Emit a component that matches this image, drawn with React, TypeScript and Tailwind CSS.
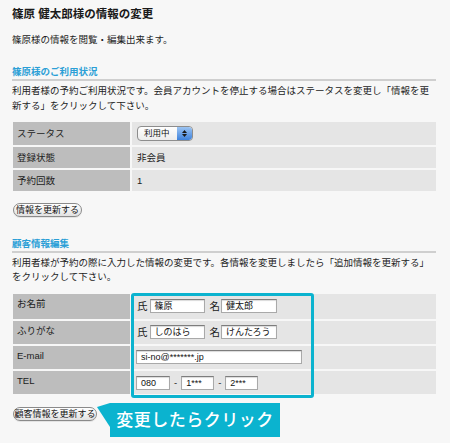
import React from "react";

const font = "font-['Liberation_Sans','Noto_Sans_CJK_JP',sans-serif]";

function Field({ w, value }: { w: string; value: string }) {
  return (
    <div
      className={`${w} flex h-[14px] items-center border border-[#a9a9a9] border-t-[#7d7d7d] bg-white pl-[4px] text-[9px] leading-none text-[#111] shadow-[inset_0_1px_1px_rgba(0,0,0,0.15)]`}
    >
      {value}
    </div>
  );
}

function PillButton({ label, w }: { label: string; w: string }) {
  return (
    <button
      className={`${w} flex h-[14px] items-center justify-center rounded-full border border-[#8a8a8a] bg-gradient-to-b from-white to-[#e2e2e2] text-[9px] leading-none text-[#111] shadow-[0_1px_0_rgba(0,0,0,0.08)]`}
    >
      {label}
    </button>
  );
}

function SectionHead({ title }: { title: string }) {
  return (
    <div className="border-b-2 border-[#cfcfcf] text-[9.5px] font-bold leading-[14px] text-[#2b9fd6]">
      {title}
    </div>
  );
}

function StatusSelect() {
  return (
    <div className="flex h-[15px] w-[56px] items-stretch overflow-hidden rounded-[4px] border border-[#8d8d8d] bg-gradient-to-b from-white to-[#ececec]">
      <span className="flex flex-1 items-center pl-[6px] text-[8.5px] leading-none text-[#111]">
        利用中
      </span>
      <span className="flex w-[15px] flex-col items-center justify-center gap-[1px] rounded-r-[3px] bg-gradient-to-b from-[#9cc4f2] to-[#3d82dc]">
        <svg width="5" height="3" viewBox="0 0 5 3">
          <polygon points="2.5,0 5,3 0,3" fill="#1a1a1a" />
        </svg>
        <svg width="5" height="3" viewBox="0 0 5 3">
          <polygon points="0,0 5,0 2.5,3" fill="#1a1a1a" />
        </svg>
      </span>
    </div>
  );
}

export default function App() {
  const usage = [
    { label: "ステータス", h: "h-[23px]", value: <StatusSelect /> },
    { label: "登録状態", h: "h-[21px]", value: "非会員" },
    { label: "予約回数", h: "h-[21px]", value: "1" },
  ];

  return (
    <div className={`${font} min-h-[443px] w-[450px] bg-[#f7f7f7] pl-[12px] pr-[14px] pt-[6px] text-[#1c1c1c]`}>
      <h1 className="text-[11.5px] font-bold leading-[16px] text-[#1a1a1a]">篠原 健太郎様の情報の変更</h1>
      <p className="mt-[11px] text-[9.5px] leading-[14px]">篠原様の情報を閲覧・編集出来ます。</p>

      {/* ご利用状況 */}
      <div className="mt-[18px]">
        <SectionHead title="篠原様のご利用状況" />
        <p className="mt-[2px] text-[9.5px] leading-[15px]">
          利用者様の予約ご利用状況です。会員アカウントを停止する場合はステータスを変更し「情報を更新する」をクリックして下さい。
        </p>
      </div>

      <div className="mt-[9px] ml-[1px] grid grid-cols-[117px_1fr] gap-[2px]">
        {usage.map((r) => (
          <React.Fragment key={r.label}>
            <div className={`${r.h} flex items-center bg-[#bdbdbd] pl-[4px] text-[9.5px] leading-none`}>
              {r.label}
            </div>
            <div className={`${r.h} flex items-center bg-[#e5e5e5] pl-[5px] text-[9.5px] leading-none`}>
              {r.value}
            </div>
          </React.Fragment>
        ))}
      </div>

      <div className="mt-[12px] ml-[1px]">
        <PillButton label="情報を更新する" w="w-[69px]" />
      </div>

      {/* 顧客情報編集 */}
      <div className="mt-[20px]">
        <SectionHead title="顧客情報編集" />
        <p className="mt-[3px] text-[9.5px] leading-[14px]">
          利用者様が予約の際に入力した情報の変更です。各情報を変更しましたら「追加情報を更新する」をクリックして下さい。
        </p>
      </div>

      <div className="relative mt-[10px] ml-[1px] grid grid-cols-[117px_1fr] gap-[2px]">
        <div className="h-[25px] bg-[#bdbdbd] pl-[4px] pt-[3px] text-[9.5px] leading-[14px]">お名前</div>
        <div className="flex h-[25px] items-start bg-[#e5e5e5] pl-[5px] pt-[5px] text-[10.5px] leading-[14px]">
          <span>氏</span>
          <span className="ml-[2px]"><Field w="w-[55px]" value="篠原" /></span>
          <span className="ml-[5px]">名</span>
          <span className="ml-[1px]"><Field w="w-[56px]" value="健太郎" /></span>
        </div>

        <div className="h-[23px] bg-[#bdbdbd] pl-[4px] pt-[3px] text-[9.5px] leading-[14px]">ふりがな</div>
        <div className="flex h-[23px] items-start bg-[#e5e5e5] pl-[5px] pt-[4px] text-[10.5px] leading-[14px]">
          <span>氏</span>
          <span className="ml-[2px]"><Field w="w-[55px]" value="しのはら" /></span>
          <span className="ml-[5px]">名</span>
          <span className="ml-[1px]"><Field w="w-[56px]" value="けんたろう" /></span>
        </div>

        <div className="h-[23px] bg-[#bdbdbd] pl-[4px] pt-[3px] text-[9.5px] leading-[14px]">E-mail</div>
        <div className="h-[23px] bg-[#e5e5e5] pl-[4px] pt-[4px]">
          <Field w="w-[166px]" value="si-no@*******.jp" />
        </div>

        <div className="h-[23px] bg-[#bdbdbd] pl-[4px] pt-[3px] text-[9.5px] leading-[14px]">TEL</div>
        <div className="flex h-[23px] items-start gap-[4px] bg-[#e5e5e5] pl-[4px] pt-[5px] text-[9.5px] leading-[14px]">
          <Field w="w-[34px]" value="080" />
          <span>-</span>
          <Field w="w-[33px]" value="1***" />
          <span>-</span>
          <Field w="w-[33px]" value="2***" />
        </div>

        {/* highlight frame over the editable cells */}
        <div className="pointer-events-none absolute left-[118px] top-[-1px] h-[105px] w-[183px] rounded-[3px] border-[3px] border-[#0bb3cf]" />
      </div>

      <div className="mt-[9px] ml-[1px] flex items-start">
        <div className="mt-[4px]">
          <PillButton label="顧客情報を更新する" w="w-[84px]" />
        </div>
        <svg width="13" height="26" viewBox="0 0 13 26" className="block">
          <polygon points="0,4 13,0 13,24" fill="#0bb3cf" />
        </svg>
        <div className="flex h-[34px] w-[170px] items-center justify-center bg-[#0bb3cf] text-[17px] font-medium leading-none tracking-[0.5px] text-white">
          変更したらクリック
        </div>
      </div>
    </div>
  );
}
